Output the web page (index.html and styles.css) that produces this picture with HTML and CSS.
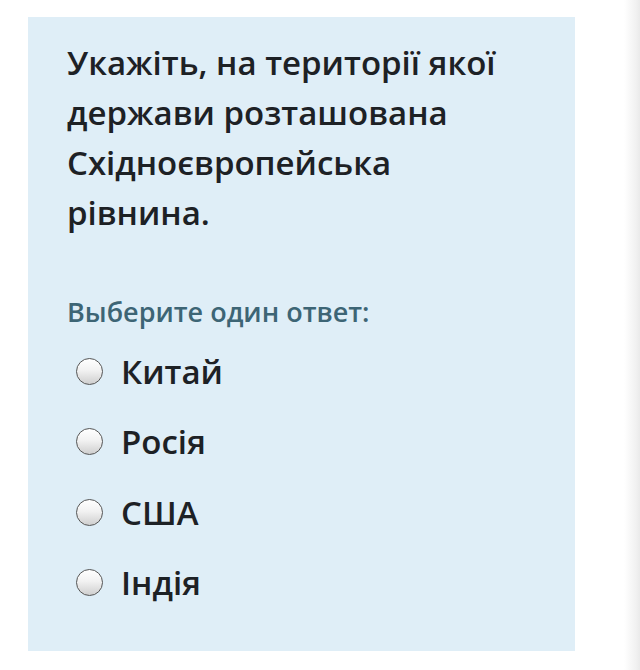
FILE: index.html
```html
<!DOCTYPE html>
<html lang="uk">
<head>
<meta charset="utf-8">
<title>Питання</title>
<link rel="stylesheet" href="styles.css">
</head>
<body>
<div class="page">
  <section class="card">
    <h1 class="question">Укажіть, на території якої держави розташована Східноєвропейська рівнина.</h1>
    <div class="prompt">Выберите один ответ:</div>
    <div class="answers">
      <label class="option"><span class="radio"></span><span class="option-text">Китай</span></label>
      <label class="option"><span class="radio"></span><span class="option-text">Росія</span></label>
      <label class="option"><span class="radio"></span><span class="option-text">США</span></label>
      <label class="option"><span class="radio"></span><span class="option-text">Індія</span></label>
    </div>
  </section>
</div>
</body>
</html>
```

FILE: styles.css
```css
html, body {
  margin: 0;
  padding: 0;
  background: #ffffff;
}
body {
  width: 640px;
  height: 670px;
  overflow: hidden;
  font-family: "Open Sans", "Noto Sans", "Liberation Sans", sans-serif;
  color: #1d2125;
}
.page {
  height: 670px;
  padding: 17px 0 0 28px;
  box-sizing: border-box;
  background: linear-gradient(to right, #ffffff 0, #ffffff 624px, #f1f1f1 636px, #eaeaea 640px);
}
.card {
  width: 547px;
  height: 634px;
  box-sizing: border-box;
  background: #dfeef7;
  padding: 21px 39px 0 39px;
}
.question {
  margin: 0;
  font-size: 33px;
  line-height: 50px;
  font-weight: 600;
  color: #1d2125;
}
.prompt {
  margin-top: 59px;
  font-size: 27px;
  line-height: 30px;
  font-weight: 600;
  color: #3d6575;
}
.answers {
  display: flex;
  flex-direction: column;
  margin-top: 9px;
  padding-left: 9px;
}
.option {
  display: flex;
  align-items: center;
  gap: 18px;
  height: 70.5px;
  font-size: 33px;
  font-weight: 600;
  color: #1d2125;
}
.radio {
  width: 25px;
  height: 25px;
  border-radius: 50%;
  border: 1.5px solid #555555;
  background: linear-gradient(to bottom, #ffffff 0, #f2f2f2 45%, #cfcfcf 100%);
  flex: none;
}
```
